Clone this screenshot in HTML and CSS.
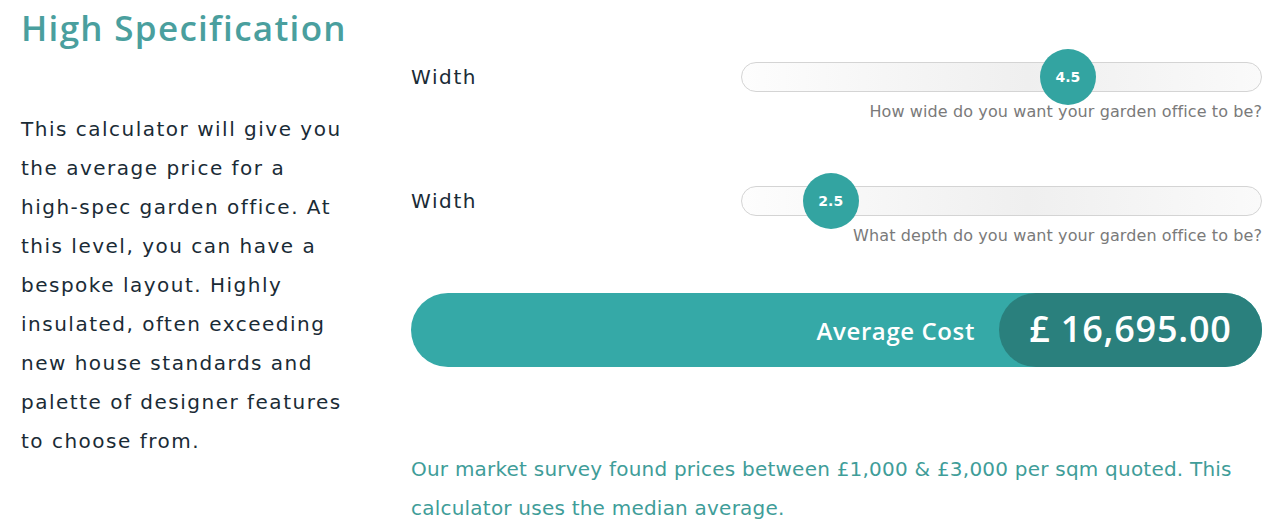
FILE: index.html
```html
<!DOCTYPE html>
<html lang="en">
<head>
    <meta charset="UTF-8">
    <meta name="viewport" content="width=device-width, initial-scale=1.0">
    <title>High Specification Calculator</title>
    <link rel="stylesheet" href="styles.css">
</head>
<body>
    <div class="page">
        <div class="intro">
            <h1>High Specification</h1>
            <p>This calculator will give you the average price for a high&#8209;spec garden office. At this level, you can have a bespoke layout. Highly insulated, often exceeding new house standards and palette of designer features to choose from.</p>
        </div>

        <div class="calc">
            <div class="row">
                <label class="row-label">Width</label>
                <div class="slider">
                    <div class="track">
                        <span class="thumb" style="left: 62.8%">4.5</span>
                    </div>
                    <div class="hint">How wide do you want your garden office to be?</div>
                </div>
            </div>

            <div class="row last">
                <label class="row-label">Width</label>
                <div class="slider">
                    <div class="track">
                        <span class="thumb" style="left: 17.1%">2.5</span>
                    </div>
                    <div class="hint">What depth do you want your garden office to be?</div>
                </div>
            </div>

            <div class="cost">
                <span class="cost-label">Average Cost</span>
                <span class="cost-value">£ 16,695.00</span>
            </div>

            <p class="note">Our market survey found prices between £1,000 &amp; £3,000 per sqm quoted. This calculator uses the median average.</p>
        </div>
    </div>
</body>
</html>
```

FILE: styles.css
```css
body {
    margin: 0;
    padding: 0;
    background-color: #fff;
    font-family: "DejaVu Sans", sans-serif;
    color: #1a2b36;
}
.page {
    display: flex;
    padding: 0 13px 0 21px;
}
.intro {
    flex: 0 0 390px;
}
h1 {
    margin: 8px 0 0;
    font-family: "Open Sans", sans-serif;
    font-size: 35px;
    font-weight: 600;
    line-height: 40px;
    letter-spacing: 1.3px;
    color: #4a9f9e;
}
.intro p {
    max-width: 330px;
    margin: 62px 0 0;
    font-size: 20px;
    line-height: 39px;
    letter-spacing: 1.5px;
}
.calc {
    flex: 1;
    padding-top: 62px;
}
.row {
    display: flex;
    height: 124px;
}
.row.last {
    height: 107px;
}
.row-label {
    flex: 0 0 330px;
    font-size: 20px;
    line-height: 30px;
    letter-spacing: 1.6px;
}
.slider {
    flex: 1;
}
.track {
    position: relative;
    height: 28px;
    border: 1px solid #d4d4d4;
    border-radius: 15px;
    background: linear-gradient(to right, #fdfdfd, #efefef 55%, #fafafa);
}
.thumb {
    position: absolute;
    top: 50%;
    width: 56px;
    height: 56px;
    margin: -28px 0 0 -28px;
    border-radius: 50%;
    background-color: #33a4a1;
    color: #fff;
    font-size: 14px;
    font-weight: bold;
    line-height: 56px;
    text-align: center;
}
.hint {
    margin-top: 10px;
    font-size: 16px;
    letter-spacing: 0.1px;
    color: #7a7a7a;
    text-align: right;
}
.cost {
    display: flex;
    align-items: center;
    justify-content: flex-end;
    height: 74px;
    border-radius: 37px;
    background-color: #35a9a7;
    color: #fff;
    font-family: "Open Sans", sans-serif;
    font-weight: 600;
}
.cost-label {
    margin-right: 24px;
    font-size: 24px;
    letter-spacing: 0.6px;
}
.cost-value {
    width: 263px;
    height: 74px;
    border-radius: 37px;
    background-color: #2a807d;
    font-size: 36px;
    line-height: 72px;
    letter-spacing: 0.8px;
    text-align: center;
}
.note {
    margin: 83px 0 0;
    font-size: 20px;
    line-height: 39px;
    letter-spacing: 0.22px;
    color: #3f9d99;
}
```
